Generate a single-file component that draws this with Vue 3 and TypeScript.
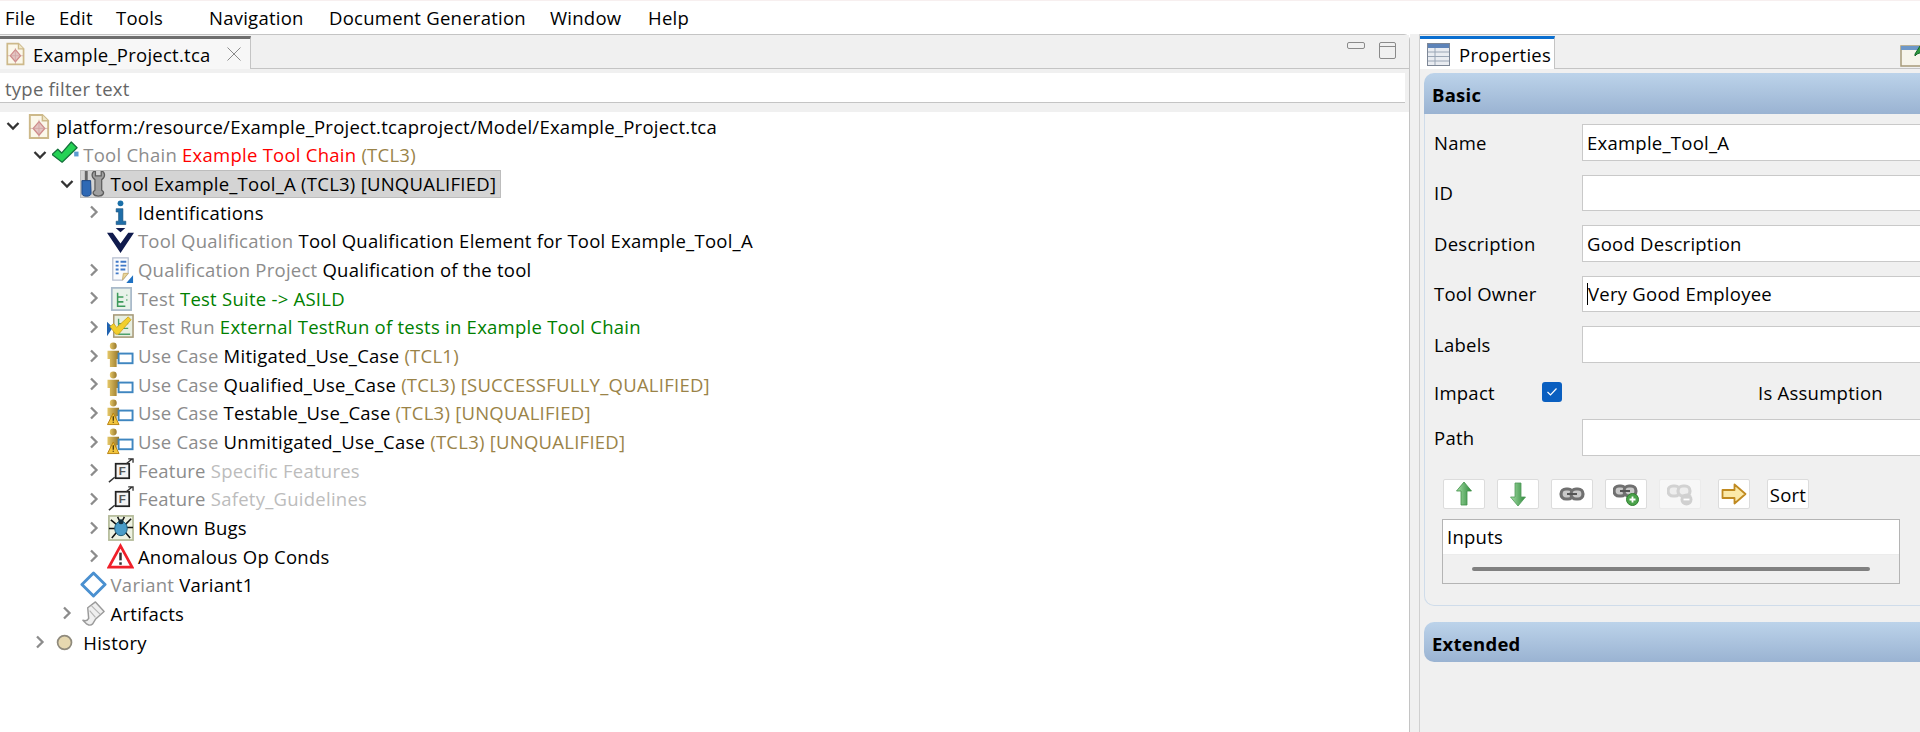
<script setup lang="ts">
type Seg = { t: string; c?: string };
type Row = {
  depth: number;
  chevron?: "down" | "right";
  icon: string;
  selected?: boolean;
  segs: Seg[];
};

const menus = [
  { label: "File", width: 54 },
  { label: "Edit", width: 57 },
  { label: "Tools", width: 93 },
  { label: "Navigation", width: 120 },
  { label: "Document Generation", width: 221 },
  { label: "Window", width: 98 },
  { label: "Help", width: 60 },
];

const rows: Row[] = [
  { depth: 0, chevron: "down", icon: "file", segs: [{ t: "platform:/resource/Example_Project.tcaproject/Model/Example_Project.tca" }] },
  { depth: 1, chevron: "down", icon: "check", segs: [{ t: "Tool Chain ", c: "gray" }, { t: "Example Tool Chain ", c: "red" }, { t: "(TCL3)", c: "tan" }] },
  { depth: 2, chevron: "down", icon: "tool", selected: true, segs: [{ t: "Tool Example_Tool_A (TCL3) [UNQUALIFIED]" }] },
  { depth: 3, chevron: "right", icon: "info", segs: [{ t: "Identifications" }] },
  { depth: 3, icon: "vee", segs: [{ t: "Tool Qualification ", c: "gray" }, { t: "Tool Qualification Element for Tool Example_Tool_A" }] },
  { depth: 3, chevron: "right", icon: "project", segs: [{ t: "Qualification Project ", c: "gray" }, { t: "Qualification of the tool" }] },
  { depth: 3, chevron: "right", icon: "test", segs: [{ t: "Test ", c: "gray" }, { t: "Test Suite -> ASILD", c: "green" }] },
  { depth: 3, chevron: "right", icon: "run", segs: [{ t: "Test Run ", c: "gray" }, { t: "External TestRun of tests in Example Tool Chain", c: "green" }] },
  { depth: 3, chevron: "right", icon: "usecase", segs: [{ t: "Use Case ", c: "gray" }, { t: "Mitigated_Use_Case " }, { t: "(TCL1)", c: "tan" }] },
  { depth: 3, chevron: "right", icon: "usecase", segs: [{ t: "Use Case ", c: "gray" }, { t: "Qualified_Use_Case " }, { t: "(TCL3) [SUCCESSFULLY_QUALIFIED]", c: "tan" }] },
  { depth: 3, chevron: "right", icon: "usecase-warn", segs: [{ t: "Use Case ", c: "gray" }, { t: "Testable_Use_Case " }, { t: "(TCL3) [UNQUALIFIED]", c: "tan" }] },
  { depth: 3, chevron: "right", icon: "usecase-warn", segs: [{ t: "Use Case ", c: "gray" }, { t: "Unmitigated_Use_Case " }, { t: "(TCL3) [UNQUALIFIED]", c: "tan" }] },
  { depth: 3, chevron: "right", icon: "feature", segs: [{ t: "Feature ", c: "gray" }, { t: "Specific Features", c: "light" }] },
  { depth: 3, chevron: "right", icon: "feature", segs: [{ t: "Feature ", c: "gray" }, { t: "Safety_Guidelines", c: "light" }] },
  { depth: 3, chevron: "right", icon: "bug", segs: [{ t: "Known Bugs" }] },
  { depth: 3, chevron: "right", icon: "warn", segs: [{ t: "Anomalous Op Conds" }] },
  { depth: 2, icon: "variant", segs: [{ t: "Variant ", c: "gray" }, { t: "Variant1" }] },
  { depth: 2, chevron: "right", icon: "artifacts", segs: [{ t: "Artifacts" }] },
  { depth: 1, chevron: "right", icon: "history", segs: [{ t: "History" }] },
];

const topFields = [
  { label: "Name", value: "Example_Tool_A" },
  { label: "ID", value: "" },
  { label: "Description", value: "Good Description" },
  { label: "Tool Owner", value: "Very Good Employee", caret: true },
  { label: "Labels", value: "" },
];

const tools = [
  { icon: "btn-up" },
  { icon: "btn-down" },
  { icon: "btn-link" },
  { icon: "btn-add" },
  { icon: "btn-remove", disabled: true },
  { icon: "btn-right", narrow: true },
];
</script>

<template>
  <div class="app">
    <svg class="defs" width="0" height="0" aria-hidden="true">
      <defs>
        <linearGradient id="gUp" x1="0" y1="0" x2="1" y2="0">
          <stop offset="0" stop-color="#a8dfa8" />
          <stop offset="1" stop-color="#2f8a3c" />
        </linearGradient>
        <linearGradient id="gGold" x1="0" y1="0" x2="1" y2="0">
          <stop offset="0" stop-color="#e6c868" />
          <stop offset="1" stop-color="#96762a" />
        </linearGradient>
      </defs>
      <symbol id="file" viewBox="0 0 28 28">
        <path d="M5 2h13l6 6v18H5z" fill="#fbf7ea" stroke="#cdb98a" stroke-width="2" />
        <path d="M18 2v6h6" fill="#efe6c8" stroke="#cdb98a" stroke-width="1.500" />
        <path d="M14.500 9l6 7-6 7-6-7z" fill="#e3c4c2" stroke="#cf8b8b" stroke-width="1.400" />
        <path d="M5 16h19M14.500 7v19" stroke="#c99" stroke-width=".9" opacity=".7" />
      </symbol>
      <symbol id="check" viewBox="0 0 28 28">
        <path d="M0 14l6-5.500 4 4L20 1l6 6-15.500 15z" fill="#25d255" stroke="#14703a" stroke-width="1.300" stroke-linejoin="round" />
        <rect x="23" y="11" width="4.500" height="5" fill="#5b9bd0" />
      </symbol>
      <symbol id="tool" viewBox="0 0 28 28">
        <rect x="5" y="1" width="3" height="10" fill="#666" />
        <path d="M2 11h9l.5 13a4.500 3 0 0 1-9.500 0z" fill="#2f69b5" stroke="#1d4680" />
        <path d="M16 1v5h6V1c4 1 5 6 .5 9v11c3.500 2 2 6-3.500 6s-7-4-3.500-6V10C11 7 12 2 16 1z" fill="#a0a0a0" stroke="#5c5c5c" stroke-width="1.300" />
      </symbol>
      <symbol id="info" viewBox="0 0 28 28">
        <circle cx="14" cy="4.500" r="3" fill="#1a6fa8" />
        <path d="M9.500 10h7v13h3v3.500h-10V23h2.500v-9.500h-2.500z" fill="#1f6ea8" stroke="#0f4a78" stroke-width=".6" />
      </symbol>
      <symbol id="vee" viewBox="0 0 28 28">
        <path d="M9 1h10l-5 4.500z" fill="#101b4d" />
        <path d="M0 6h6l8 11 8-11h6L14 27z" fill="#101b4d" />
      </symbol>
      <symbol id="project" viewBox="0 0 28 28">
        <path d="M6 2h16v16l-6 7H6z" fill="#fafbfd" stroke="#b6bfd0" stroke-width="1.300" />
        <path d="M16 25l1-7h5z" fill="#e9d59a" stroke="#cbb070" />
        <path d="M9 6h3M14 6h6M9 10h3M14 10h6M9 14h3M14 14h5M9 18h3" stroke="#3f78c8" stroke-width="2" />
        <path d="M27 20v8h-7z" fill="#1f71c2" />
      </symbol>
      <symbol id="test" viewBox="0 0 28 28">
        <rect x="5" y="3" width="20" height="23" fill="#e9f2ea" stroke="#a8b9c9" stroke-width="1.800" />
        <path d="M11 8v14h8M11 12.500h6M11 17.500h6M20.500 10v1M20.500 15v1" stroke="#3d9a5a" stroke-width="1.600" fill="none" />
      </symbol>
      <symbol id="run" viewBox="0 0 28 28">
        <rect x="7" y="2" width="20" height="23" fill="#e8efe2" stroke="#a79a78" stroke-width="1.600" />
        <path d="M12 6v16h12M12 11h10M12 16h10" stroke="#4da06a" stroke-width="1.400" fill="none" />
        <path d="M0 9l6 6-6 9z" fill="#1f62b0" />
        <path d="M3 14l4-3 3 4L22 4l3 3-13 15h-3z" fill="#f2cf2d" stroke="#c79c1a" stroke-width=".8" />
      </symbol>
      <symbol id="usecase" viewBox="0 0 28 28">
        <circle cx="6.500" cy="4.200" r="3.600" fill="url(#gGold)" />
        <path d="M0.500 9h12v8.500H10V26H3v-8.500H0.500z" fill="url(#gGold)" />
        <rect x="12" y="12" width="14.500" height="10" fill="#fff" stroke="#3f86c0" stroke-width="2" />
      </symbol>
      <symbol id="usecase-warn" viewBox="0 0 28 28">
        <circle cx="6.500" cy="4.200" r="3.600" fill="url(#gGold)" />
        <path d="M0.500 9h12v8.500H10V22H3v-4.500H0.500z" fill="url(#gGold)" />
        <rect x="12" y="12" width="14.500" height="10" fill="#fff" stroke="#3f86c0" stroke-width="2" />
        <path d="M6.500 14.500l6 12H.5z" fill="#f2c53d" stroke="#b98312" stroke-width="1" />
        <path d="M6.500 18v4.500M6.500 23.500v1.200" stroke="#3c2c08" stroke-width="1.300" />
      </symbol>
      <symbol id="feature" viewBox="0 0 28 28">
        <rect x="9" y="7" width="14" height="15" fill="#f3f3f3" stroke="#222" stroke-width="1.800" />
        <path d="M20 7l6-5M22 2h5v4" stroke="#333" stroke-width="1.400" fill="none" />
        <path d="M8 21l-6 5" stroke="#333" stroke-width="1.600" />
      </symbol>
      <symbol id="bug" viewBox="0 0 28 28">
        <rect x="2" y="2" width="25" height="25" fill="#eef2e2" stroke="#b4bb9a" stroke-width="1.800" />
        <path d="M4 6l6 5M25 5l-6 6M2 15h7M27 14h-7M5 25l5-6M24 25l-5-6M11 3l2 4M18 3l-2 4" stroke="#111" stroke-width="1.600" />
        <ellipse cx="14.500" cy="15" rx="6.500" ry="7.500" fill="#4a9cc8" stroke="#1b5b78" />
        <circle cx="14.500" cy="8" r="2.600" fill="#143040" />
      </symbol>
      <symbol id="warn" viewBox="0 0 28 28">
        <path d="M14 3l12 22H2z" fill="#fff" stroke="#f0202a" stroke-width="2.800" stroke-linejoin="miter" />
        <path d="M14 10v8" stroke="#333" stroke-width="2.600" />
        <path d="M14 20v2.600" stroke="#333" stroke-width="2.600" />
      </symbol>
      <symbol id="variant" viewBox="0 0 28 28">
        <path d="M14 2l12 12-12 12L2 14z" fill="#fff" stroke="#4a90d0" stroke-width="3" stroke-linejoin="round" />
      </symbol>
      <symbol id="artifacts" viewBox="0 0 28 28">
        <path d="M8 8l8-6 9 10-9 8-3 5c-2 2-6 1-8-2l-2-2c3 1 5 0 6-2z" fill="#efefef" stroke="#9a9a9a" stroke-width="1.500" stroke-linejoin="round" />
        <path d="M12 6l9 9M10 11l6 7" stroke="#b5b5b5" stroke-width="1.200" />
      </symbol>
      <symbol id="history" viewBox="0 0 28 28">
        <circle cx="13" cy="14" r="7.200" fill="#e6d8b0" stroke="#8f8a7c" stroke-width="1.800" />
      </symbol>
      <symbol id="btn-up" viewBox="0 0 26 26">
        <path d="M13 1l7.500 9H16v14h-6V10H5.500z" fill="url(#gUp)" stroke="#3f9048" stroke-width=".8" />
      </symbol>
      <symbol id="btn-down" viewBox="0 0 26 26">
        <path d="M13 25l-7.500-9H10V2h6v14h4.500z" fill="url(#gUp)" stroke="#4f9a58" stroke-width=".8" />
      </symbol>
      <symbol id="btn-link" viewBox="0 0 26 26">
        <rect x="2" y="8" width="12" height="10" rx="5" fill="#c9c9c9" stroke="#707070" stroke-width="3.200" />
        <rect x="12" y="8" width="12" height="10" rx="5" fill="#c9c9c9" stroke="#707070" stroke-width="3.200" />
        <path d="M8 13h10" stroke="#555" stroke-width="2" />
      </symbol>
      <symbol id="btn-add" viewBox="0 0 26 26">
        <rect x="1" y="5" width="12" height="10" rx="5" fill="#c9c9c9" stroke="#707070" stroke-width="3.200" />
        <rect x="11" y="5" width="12" height="10" rx="5" fill="#c9c9c9" stroke="#707070" stroke-width="3.200" />
        <path d="M7 10h10" stroke="#555" stroke-width="2" />
        <circle cx="19.500" cy="18.500" r="6" fill="#4aa34a" stroke="#2f7f2f" />
        <path d="M16.500 18.500h6M19.500 15.500v6" stroke="#fff" stroke-width="1.800" />
      </symbol>
      <symbol id="btn-remove" viewBox="0 0 26 26">
        <rect x="1" y="5" width="12" height="10" rx="5" fill="#eee" stroke="#d2d2d2" stroke-width="3.200" />
        <rect x="11" y="5" width="12" height="10" rx="5" fill="#eee" stroke="#d2d2d2" stroke-width="3.200" />
        <circle cx="19.500" cy="18.500" r="6" fill="#d0d0d0" />
        <path d="M16.500 18.500h6" stroke="#fff" stroke-width="1.800" />
      </symbol>
      <symbol id="btn-right" viewBox="0 0 26 26">
        <path d="M1.500 9h12V3.500L24.500 13 13.500 22.500V17h-12z" fill="#fbe9a8" stroke="#c08a20" stroke-width="1.800" stroke-linejoin="round" />
      </symbol>
    </svg>

    <nav class="menubar">
      <span v-for="m in menus" :key="m.label" class="menu" :style="{ width: m.width + 'px' }">{{ m.label }}</span>
    </nav>

    <div class="workbench">
      <section class="left">
        <div class="tabbar">
          <div class="tab editor-tab">
            <svg class="tab-icon" width="24" height="26"><use href="#file" /></svg>
            <span>Example_Project.tca</span>
            <svg class="close" width="16" height="16" viewBox="0 0 16 16">
              <path d="M1.500 1.500l13 13M14.500 1.500l-13 13" stroke="#8a8a8a" stroke-width="1" />
            </svg>
          </div>
          <div class="view-actions">
            <span class="minimize"></span>
            <span class="maximize"></span>
          </div>
        </div>
        <div class="filter">type filter text</div>
        <div class="tree">
          <div v-for="(row, i) in rows" :key="i" class="row" :style="{ paddingLeft: row.depth * 27.3 + 'px' }">
            <span class="chevron">
              <svg v-if="row.chevron === 'down'" width="14" height="10" viewBox="0 0 14 10">
                <path d="M1.500 2l5.500 5.500L12.500 2" fill="none" stroke="#333" stroke-width="2.300" />
              </svg>
              <svg v-else-if="row.chevron === 'right'" width="10" height="14" viewBox="0 0 10 14">
                <path d="M2 1.500L7.500 7 2 12.500" fill="none" stroke="#8c8c8c" stroke-width="2.300" />
              </svg>
            </span>
            <span class="node" :class="{ selected: row.selected }">
              <svg class="icon" width="27" height="27" viewBox="0 0 28 28">
                <use :href="'#' + row.icon" width="28" height="28" />
                <text v-if="row.icon === 'feature'" x="12.200" y="19" class="feature-f">F</text>
              </svg>
              <span class="label">
                <span v-for="(s, j) in row.segs" :key="j" :class="s.c">{{ s.t }}</span>
              </span>
            </span>
          </div>
        </div>
      </section>

      <div class="sash"></div>

      <section class="right">
        <div class="tabbar props-bar">
          <div class="tab props-tab">
            <svg width="23" height="24" viewBox="0 0 23 24">
              <rect x=".5" y="1.500" width="22" height="22" fill="#e9ecf1" stroke="#7d8796" />
              <rect x="1" y="2" width="21" height="4" fill="#5d83b8" />
              <path d="M1 10h21M1 14.500h21M1 19h21M8 6v17" stroke="#9aa6b6" />
            </svg>
            <span>Properties</span>
          </div>
          <svg class="pin" width="26" height="26" viewBox="0 0 26 26">
            <rect x="1" y="5" width="24" height="20" fill="#f6f4ea" stroke="#a79a78" stroke-width="1.500" />
            <rect x="1" y="5" width="24" height="4" fill="#6d97c8" />
            <path d="M15 13l5-8 5 5-8 3-2 2z" fill="#2e9a3c" stroke="#16662a" />
          </svg>
        </div>

        <div class="section-head basic-head">Basic</div>
        <div class="section-body">
          <div v-for="f in topFields" :key="f.label" class="field-row">
            <label>{{ f.label }}</label>
            <div class="input"><i v-if="f.caret" class="caret"></i>{{ f.value }}</div>
          </div>
          <div class="impact-row">
            <label>Impact</label>
            <span class="checkbox">
              <svg width="12" height="10" viewBox="0 0 12 10">
                <path d="M1.500 5l3 3 6-6.500" fill="none" stroke="#fff" stroke-width="1.200" />
              </svg>
            </span>
            <span class="assumption">Is Assumption</span>
          </div>
          <div class="field-row">
            <label>Path</label>
            <div class="input"></div>
          </div>
          <div class="toolbar">
            <button
              v-for="b in tools"
              :key="b.icon"
              class="tool-btn"
              :class="{ disabled: b.disabled, narrow: b.narrow }"
            >
              <svg width="26" height="26"><use :href="'#' + b.icon" width="26" height="26" /></svg>
            </button>
            <button class="tool-btn sort">Sort</button>
          </div>
          <div class="inputs-table">
            <div class="table-head">Inputs</div>
            <div class="table-scroll"><div class="thumb"></div></div>
          </div>
        </div>
        <div class="section-head extended-head">Extended</div>
      </section>
    </div>
  </div>
</template>

<style>
html,
body {
  margin: 0;
  background: #fff;
  overflow: hidden;
}
</style>

<style scoped>
.app {
  width: 1920px;
  height: 732px;
  overflow: hidden;
  font-family: "Open Sans", "Noto Sans", sans-serif;
  font-size: 18.5px;
  letter-spacing: 0.25px;
  color: #000;
  background: #fff;
}

.defs {
  position: absolute;
}

.menubar {
  height: 34px;
  display: flex;
  align-items: center;
  padding-left: 5px;
  box-sizing: border-box;
  border-top: 1px solid #f7efef;
}

.menu {
  flex: none;
  white-space: nowrap;
}

.workbench {
  display: flex;
  height: 698px;
}

.left {
  width: 1410px;
  flex: none;
  display: flex;
  flex-direction: column;
  background: #f0f0f0;
  border-top: 1px solid #c4c4c4;
  border-right: 1px solid #c4c4c4;
  border-top-right-radius: 6px;
  box-sizing: border-box;
}

.tabbar {
  height: 34px;
  flex: none;
  display: flex;
  align-items: stretch;
  justify-content: space-between;
  box-sizing: border-box;
  padding-top: 1px;
  border-bottom: 1px solid #c4c4c4;
  background: #f0f0f0;
}

.tab {
  display: flex;
  align-items: center;
  box-sizing: border-box;
  background: #f7f7f7;
  border-right: 1px solid #c4c4c4;
  margin-bottom: -1px;
}

.editor-tab {
  width: 251px;
  border-top: 3px solid #6e6e6e;
  padding-left: 3px;
  gap: 6px;
}

.close {
  margin-left: 9px;
}

.view-actions {
  display: flex;
  align-items: flex-start;
  gap: 14px;
  padding: 6px 13px 0 0;
}

.minimize {
  width: 16px;
  height: 5px;
  border: 1px solid #8a8a8a;
  border-radius: 2px;
}

.maximize {
  width: 15px;
  height: 15px;
  border: 1px solid #8a8a8a;
  border-radius: 2px;
  background: linear-gradient(#8a8a8a, #8a8a8a) 0 3px / 100% 1px no-repeat;
}

.filter {
  height: 29px;
  flex: none;
  margin: 4px 4px 0 0;
  line-height: 31px;
  padding-left: 5px;
  background: #fff;
  color: #666;
  border-bottom: 1px solid #c4c4c4;
}

.tree {
  flex: 1;
  margin-top: 9px;
  background: #fff;
}

.row {
  height: 28.67px;
  display: flex;
  align-items: center;
  white-space: nowrap;
}

.chevron {
  flex: none;
  width: 25px;
  display: flex;
  justify-content: center;
  align-items: center;
}

.node {
  display: flex;
  align-items: center;
  height: 28px;
  box-sizing: border-box;
  padding-right: 5px;
}

.node.selected {
  background: #d4d4d4;
  outline: 1px solid #bdbdbd;
  outline-offset: -1px;
}

.icon {
  flex: none;
}

.feature-f {
  font-family: "Liberation Sans", sans-serif;
  font-size: 12px;
  font-weight: 700;
  letter-spacing: 0;
  fill: #555;
}

.label {
  margin-left: 4px;
}

.gray {
  color: #8c8c8c;
}

.red {
  color: #ff0000;
}

.tan {
  color: #9a8348;
}

.green {
  color: #008000;
}

.light {
  color: #bcbcbc;
}

.sash {
  width: 10px;
  flex: none;
  background: #f0f0f0;
  border-right: 1px solid #d0d0d0;
  box-sizing: border-box;
}

.right {
  width: 500px;
  flex: none;
  background: #f0f0f0;
  border-top: 1px solid #c4c4c4;
  overflow: hidden;
}

.props-tab {
  width: 135px;
  border-top: 3px solid #0b6fd0;
  background: #fff;
  padding-left: 7px;
  gap: 9px;
}

.pin {
  margin: 5px -6px 0 0;
}

.section-head {
  height: 41px;
  margin-left: 4px;
  width: 520px;
  padding: 2px 0 0 8px;
  box-sizing: border-box;
  display: flex;
  align-items: center;
  font-weight: 700;
  background: linear-gradient(#bcd3ea, #9ab3d2);
}

.basic-head {
  margin-top: 4px;
  border-top-left-radius: 10px;
}

.extended-head {
  margin-top: 16px;
  border-radius: 10px 0 0 10px;
  height: 40px;
}

.section-body {
  margin-left: 4px;
  width: 520px;
  height: 492px;
  box-sizing: border-box;
  padding: 10px 0 0 9px;
  border-left: 1px solid #cfdcea;
  border-bottom: 1px solid #cfdcea;
  border-bottom-left-radius: 10px;
}

.field-row {
  display: flex;
  align-items: center;
  height: 36.500px;
  margin-bottom: 14px;
}

.field-row label {
  width: 148px;
  flex: none;
}

.input {
  flex: 1;
  height: 100%;
  box-sizing: border-box;
  background: #fff;
  border: 1px solid #c9c9c9;
  padding-left: 4px;
  display: flex;
  align-items: center;
  white-space: nowrap;
}

.caret {
  width: 0;
  height: 22px;
  border-left: 1px solid #000;
}

.impact-row {
  display: flex;
  align-items: center;
  height: 20px;
  margin-top: 19.500px;
  margin-bottom: 17px;
}

.impact-row label {
  width: 108px;
  flex: none;
}

.checkbox {
  width: 20px;
  height: 20px;
  flex: none;
  background: #0a5fc0;
  border-radius: 3px;
  display: flex;
  align-items: center;
  justify-content: center;
}

.assumption {
  margin-left: 196px;
}

.toolbar {
  display: flex;
  align-items: center;
  gap: 12px;
  padding-left: 9px;
  margin-top: 23.500px;
  height: 30px;
}

.tool-btn {
  width: 42px;
  height: 30px;
  flex: none;
  padding: 0;
  display: flex;
  align-items: center;
  justify-content: center;
  background: #fff;
  border: 1px solid #dcdcdc;
  border-radius: 2px;
  font: inherit;
  letter-spacing: inherit;
  color: #000;
}

.tool-btn.disabled {
  background: #f7f7f7;
  border-color: #ebebeb;
}

.tool-btn.narrow {
  width: 32px;
  margin-left: 5px;
  margin-right: 5px;
}

.inputs-table {
  width: 458px;
  height: 65px;
  margin: 10px 0 0 8px;
  box-sizing: border-box;
  border: 1px solid #b4b4b4;
  background: #f0f0f0;
}

.table-head {
  height: 34px;
  line-height: 34px;
  padding-left: 4px;
  background: #fff;
  border-bottom: 1px solid #ececec;
}

.table-scroll {
  padding: 12px 29px 0;
}

.thumb {
  height: 4px;
  background: #808080;
  border-radius: 2px;
}
</style>
